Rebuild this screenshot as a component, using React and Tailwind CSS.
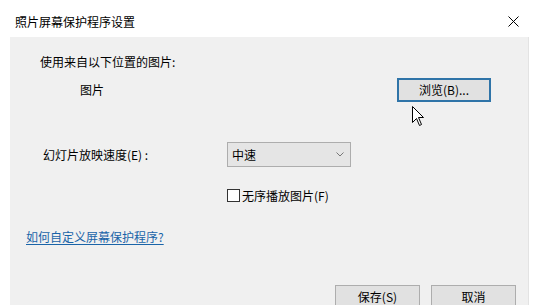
import React from "react";

const font = { fontFamily: '"Microsoft YaHei","Noto Sans CJK SC",sans-serif' };

export default function App() {
  return (
    <div
      className="relative w-[543px] h-[305px] overflow-hidden bg-white text-[12px] leading-[16px] text-black"
      style={font}
    >
      {/* title bar */}
      <div className="flex h-[37px] items-center justify-between pl-[15px] pr-[24px] pt-[6px]">
        <span className="text-[12px] leading-[16px]">照片屏幕保护程序设置</span>
        <svg width="11" height="11" viewBox="0 0 11 11">
          <path d="M0.5 0.5 L10.5 10.5 M10.5 0.5 L0.5 10.5" stroke="#000" strokeWidth="1" />
        </svg>
      </div>

      {/* body panel */}
      <div className="ml-[10px] w-[519px] h-[268px] bg-[#f0f0f0] border-r border-[#e3e3e3] flex flex-col">
        <div className="pl-[30px] mt-[17px] h-[16px]">使用来自以下位置的图片:</div>
        <div className="mt-[8px] flex h-[24px] items-center">
          <span className="pl-[70px]">图片</span>
          <div className="ml-auto mr-[37px] flex h-[24px] w-[94px] items-center justify-center border-2 border-[#2f74a8] bg-[#e1e1e1]">
            浏览(B)...
          </div>
        </div>
        <div className="mt-[22px] ml-[17px] h-px w-[480px] bg-[#a0a0a0]" />
        <div className="mt-[18px] flex h-[25px] items-center">
          <span className="pl-[33px] w-[217px]">幻灯片放映速度(E) :</span>
          <div className="flex h-[25px] w-[124px] items-center justify-between border border-[#adadad] bg-[#e5e5e5] pl-[4px] pr-[6px]">
            <span>中速</span>
            <svg width="8" height="5" viewBox="0 0 8 5">
              <path d="M0.5 0.5 L4 4 L7.5 0.5" stroke="#777" strokeWidth="1" fill="none" />
            </svg>
          </div>
        </div>
        <div className="mt-[22px] flex h-[13px] items-center pl-[217px]">
          <div className="h-[13px] w-[13px] border border-[#333] bg-white" />
          <span className="ml-[2px]">无序播放图片(F)</span>
        </div>
        <div className="mt-[27px] pl-[16px] h-[16px]">
          <span className="text-[#1a64a8] underline underline-offset-2">如何自定义屏幕保护程序?</span>
        </div>
        <div className="mt-[25px] h-px w-full bg-[#c8c8c8]" />
        <div className="mt-[15px] flex justify-end gap-[11px] pr-[12px]">
          <div className="flex h-[23px] w-[85px] items-center justify-center border border-[#adadad] bg-[#e1e1e1]">
            保存(S)
          </div>
          <div className="flex h-[23px] w-[85px] items-center justify-center border border-[#adadad] bg-[#e1e1e1]">
            取消
          </div>
        </div>
      </div>

      {/* mouse cursor */}
      <svg
        width="13"
        height="21"
        viewBox="0 0 13 21"
        className="absolute left-[412px] top-[106px]"
      >
        <path
          d="M0.5 0.5 L0.5 16.5 L4.5 12.5 L7.5 19.5 L9.5 18.5 L6.5 11.5 L11.5 11.5 Z"
          fill="#fff"
          stroke="#000"
          strokeWidth="1"
          strokeLinejoin="miter"
        />
      </svg>
    </div>
  );
}
